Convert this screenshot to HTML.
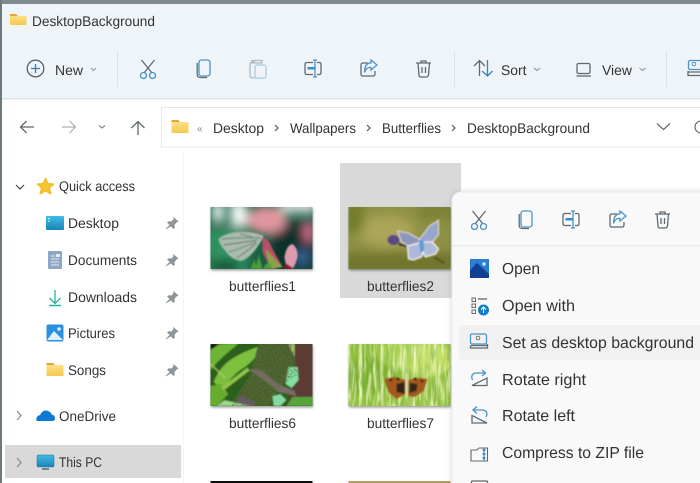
<!DOCTYPE html>
<html><head><meta charset="utf-8"><style>
html,body{margin:0;padding:0;background:#fff;width:700px;height:483px;overflow:hidden}
svg{display:block;filter:blur(.3px)}
text{font-family:"Liberation Sans",sans-serif;font-size:14px;fill:#333;text-rendering:geometricPrecision}
.m{font-size:16px}
.g{fill:none;stroke:#5e6a72;stroke-width:1.3}
.b{fill:none;stroke:#4a93c4;stroke-width:1.3}
.n{fill:none;stroke:#6b7378;stroke-width:1.2}
</style></head><body>
<svg width="700" height="483" viewBox="0 0 700 483" xmlns="http://www.w3.org/2000/svg">
<defs>
<filter id="bl6" x="-20%" y="-20%" width="140%" height="140%"><feGaussianBlur stdDeviation="5"/></filter>
<filter id="bl3" x="-20%" y="-20%" width="140%" height="140%"><feGaussianBlur stdDeviation="2.5"/></filter>
<filter id="bl1" x="-10%" y="-10%" width="120%" height="120%"><feGaussianBlur stdDeviation="0.7"/></filter>
<filter id="sh" x="-10%" y="-10%" width="120%" height="125%"><feDropShadow dx="0.5" dy="1.5" stdDeviation="1.2" flood-color="#000" flood-opacity=".4"/></filter>
<filter id="msh" x="-10%" y="-10%" width="120%" height="120%"><feDropShadow dx="0" dy="0" stdDeviation="3" flood-color="#000" flood-opacity=".14"/></filter>
<filter id="grL" x="0" y="0" width="100%" height="100%"><feTurbulence type="fractalNoise" baseFrequency=".28 .035" numOctaves="3" seed="4"/><feColorMatrix values="0 0 0 0 .9  0 0 0 0 .96  0 0 0 0 .55  2.6 0 0 0 -1.1"/></filter>
<filter id="grD" x="0" y="0" width="100%" height="100%"><feTurbulence type="fractalNoise" baseFrequency=".3 .05" numOctaves="3" seed="11"/><feColorMatrix values="0 0 0 0 .28  0 0 0 0 .5  0 0 0 0 .1  2.8 0 0 0 -1.25"/></filter>
<filter id="mot" x="0" y="0" width="100%" height="100%"><feTurbulence type="fractalNoise" baseFrequency=".55" numOctaves="2" seed="7"/><feColorMatrix values="0 0 0 0 .1  0 0 0 0 .15  0 0 0 0 .05  2.6 0 0 0 -1.1"/></filter>
<clipPath id="tc"><rect width="102" height="62"/></clipPath>
<clipPath id="moth"><path d="M48 0H82L88 30L70 42L58 62H20L40 30Z"/></clipPath>
<linearGradient id="fold" x1="0" y1="0" x2="0" y2="1"><stop offset="0" stop-color="#fde58f"/><stop offset="1" stop-color="#f5c84e"/></linearGradient>
<linearGradient id="desk" x1="0" y1="0" x2="0" y2="1"><stop offset="0" stop-color="#3fbbe6"/><stop offset="1" stop-color="#1a84ba"/></linearGradient>
<g id="cut"><path class="g" d="M1.5 0L12 13M14.500 0L4 13"/><circle class="b" cx="3.500" cy="15.500" r="3"/><circle class="b" cx="12.500" cy="15.500" r="3"/></g>
<g id="copy"><rect class="b" x="3" y="0" width="11" height="16" rx="2.400"/><path class="g" d="M1.200 3V14.500Q1.200 17.500 4.500 17.500H11"/></g>
<g id="ren"><path class="g" d="M9 2.500H3Q1 2.500 1 4.500V12.500Q1 14.500 3 14.500H9M13 2.500H15.500Q17 2.500 17 4.500V12.500Q17 14.500 15.500 14.500H13"/><path class="b" d="M9 0H13M11 0V17M9 17H13"/><rect x="3.500" y="7" width="7" height="2.500" fill="#3a8bbf"/></g>
<g id="share"><path class="g" d="M8 3H3Q1 3 1 5V14Q1 16 3 16H13Q15 16 15 14V11"/><path class="b" d="M11 0L17 5L11 10V7.400Q6 7 4.500 12.500Q4.500 3 11 2.800Z"/></g>
<g id="del"><path class="g" d="M0 3H15M5 3V1H10V3M2 3L3 15Q3 17 5 17H10Q12 17 12.500 15L13.500 3M6 7V13M9.500 7V13"/></g>
<g id="pin"><path d="M1 12L5 8L2.500 5.500L4 4.500L6.500 5L9 2L8.500 .5L13 4.500L11.500 5L9 8L9.500 10.500L8.500 11.500L6 9Z" fill="#8f9598" stroke="#8f9598" stroke-width=".7" stroke-linejoin="round"/></g>
</defs>

<!-- top chrome -->
<rect width="700" height="98" fill="#eff4f9"/>
<rect width="700" height="4" fill="#7f8a8f"/>
<rect y="98" width="700" height="1.500" fill="#dfe3e6"/>
<rect x="0" y="0" width="2" height="483" fill="#6c7a80"/>

<!-- title -->
<path d="M10 14H16L18 16H26.500V25H10Z" fill="url(#fold)"/>
<path d="M10 14H16L18 16H10Z" fill="#e2a82c"/>
<text x="32" y="26" textLength="123" lengthAdjust="spacingAndGlyphs">DesktopBackground</text>

<!-- toolbar -->
<circle cx="35.500" cy="68.500" r="8.300" class="g" style="stroke:#5a646b"/>
<path d="M35.500 64V73M31 68.500H40" class="b" style="stroke:#2f7fb5"/>
<text x="55" y="75" textLength="28" lengthAdjust="spacingAndGlyphs">New</text>
<path d="M91 68L93.500 70.500L96 68" class="n" style="stroke:#9aa1a6"/>
<rect x="117" y="51" width="1" height="36" fill="#dde2e6"/>
<use href="#cut" x="140" y="60"/>
<use href="#copy" x="196" y="60"/>
<g opacity=".42"><rect class="b" x="255" y="65" width="11" height="13" rx="2"/><path class="g" d="M255 62H253Q250 62 250 65V75Q250 78 253 78H255M252 60.500H262V63H252Z"/></g>
<use href="#ren" x="304" y="60"/>
<use href="#share" x="360" y="60"/>
<use href="#del" x="416" y="60"/>
<rect x="454" y="51" width="1" height="36" fill="#dde2e6"/>
<path class="g" d="M474 66L479.500 60.500L485 66M479.500 60.500V76"/>
<path class="b" d="M482 71L487.500 76L492.500 71M487.500 60V76" style="stroke:#3285bb"/>
<text x="501" y="75" textLength="25.500" lengthAdjust="spacingAndGlyphs">Sort</text>
<path d="M534 68L537 70.500L540 68" class="n" style="stroke:#9aa1a6"/>
<rect x="577" y="63.500" width="13" height="10" rx="1.500" class="g"/><path class="g" d="M576.500 76H591"/>
<text x="602" y="75" textLength="30" lengthAdjust="spacingAndGlyphs">View</text>
<path d="M639.500 68L642.500 70.500L645.500 68" class="n" style="stroke:#9aa1a6"/>
<rect x="666" y="51" width="1" height="36" fill="#dde2e6"/>
<rect x="688.500" y="60.500" width="14" height="9" rx="1.500" class="b"/><circle cx="694" cy="64" r="1.800" class="b" style="stroke-width:1"/><path class="g" d="M688 71V75.500H702M688 72H702"/>

<!-- nav -->
<path d="M34 127H21M26.500 121L20.500 127L26.500 133" class="g" style="stroke:#5f666b"/>
<path d="M62 127H75M69.500 121L75.500 127L69.500 133" class="n" style="stroke:#aab0b4"/>
<path d="M99 125.500L102 128L105 125.500" class="n" style="stroke:#7f868a"/>
<path d="M138 135V122M131.500 128L138 121.500L144.500 128" class="g" style="stroke:#5f666b"/>

<!-- address -->
<rect x="161.500" y="107.500" width="545" height="39.500" fill="#fff" stroke="#e5e7e9"/>
<path d="M171.500 120H178L180 122H188.500V133H171.500Z" fill="url(#fold)"/>
<path d="M171.500 120H178L180 122H171.500Z" fill="#e2a82c"/>
<text x="197" y="132" style="font-size:10px;fill:#888" textLength="7">«</text>
<text x="213" y="133" textLength="51" lengthAdjust="spacingAndGlyphs">Desktop</text>
<path d="M275 125L278 128L275 131" class="n" style="stroke:#555"/>
<text x="290" y="133" textLength="66" lengthAdjust="spacingAndGlyphs">Wallpapers</text>
<path d="M367 125L370 128L367 131" class="n" style="stroke:#555"/>
<text x="382" y="133" textLength="59" lengthAdjust="spacingAndGlyphs">Butterflies</text>
<path d="M452 125L455 128L452 131" class="n" style="stroke:#555"/>
<text x="467" y="133" textLength="123" lengthAdjust="spacingAndGlyphs">DesktopBackground</text>
<path d="M657 123.500L663.500 129.500L670 123.500" class="n" style="stroke:#666"/>
<circle cx="701" cy="127" r="6" class="n" style="stroke:#666"/>

<!-- sidebar -->
<rect x="183" y="150" width="1" height="333" fill="#f4f5f6"/>
<path d="M16 185L20 189L24 185" class="n" style="stroke:#444"/>
<path d="M45.500 178L48 183.500L54 184L49.500 188L51 194L45.500 191L40 194L41.500 188L37 184L43 183.500Z" fill="#f7c52d" stroke="#f2b722" stroke-linejoin="round"/>
<text x="59" y="191" textLength="76" lengthAdjust="spacingAndGlyphs">Quick access</text>

<rect x="46" y="216" width="18" height="14" rx="1" fill="url(#desk)"/>
<path d="M48 218.500H50M48 221H50" stroke="#d8f1fb" stroke-width="1"/>
<text x="68" y="228" textLength="51" lengthAdjust="spacingAndGlyphs">Desktop</text>
<use href="#pin" x="165" y="217"/>

<rect x="48" y="251" width="14" height="18" rx="1" fill="#8fa6c6"/>
<path d="M51 256H55M51 259H59M51 262H59M51 265H59" stroke="#e4eaf2" stroke-width="1"/><rect x="56" y="254" width="4" height="3" fill="#e4eaf2"/>
<text x="68" y="265" textLength="69" lengthAdjust="spacingAndGlyphs">Documents</text>
<use href="#pin" x="165" y="254"/>

<path d="M55 290V303M49.500 298L55 303.500L60.500 298" fill="none" stroke="#2cb09a" stroke-width="1.300"/><path d="M49 305.500H61" stroke="#2cb09a" stroke-width="1.500"/>
<text x="68" y="302" textLength="69" lengthAdjust="spacingAndGlyphs">Downloads</text>
<use href="#pin" x="165" y="291"/>

<rect x="46.500" y="324.500" width="17" height="17" rx="2" fill="#2b8fe0"/>
<path d="M47 340L54 331L63 340Z" fill="#dff0fb"/><circle cx="59" cy="329" r="1.800" fill="#dff0fb"/>
<text x="68" y="338" textLength="47" lengthAdjust="spacingAndGlyphs">Pictures</text>
<use href="#pin" x="165" y="327"/>

<path d="M46.500 363H53L55 365H63.500V376H46.500Z" fill="url(#fold)"/>
<path d="M46.500 363H53L55 365H46.500Z" fill="#e2a82c"/>
<text x="68" y="375" textLength="38" lengthAdjust="spacingAndGlyphs">Songs</text>
<use href="#pin" x="165" y="364"/>

<path d="M17 411L21 415.500L17 420" class="n" style="stroke:#888"/>
<path d="M36.500 421Q35.500 416 40 415Q43 409 48 411Q51 412 51.500 414.500Q55 415 55 418.500Q55 421 52 421Z" fill="#0f78d4"/>
<text x="59" y="421" textLength="57" lengthAdjust="spacingAndGlyphs">OneDrive</text>

<rect x="5" y="445" width="176" height="33" fill="#d9d9d9"/>
<path d="M17 458L21 462.500L17 467" class="n" style="stroke:#888"/>
<rect x="37" y="455" width="17" height="12" rx="1" fill="url(#desk)" stroke="#2a6f8e" stroke-width=".5"/>
<path d="M42 469H49" stroke="#4a6b7a" stroke-width="1.500"/>
<text x="59" y="467" textLength="43" lengthAdjust="spacingAndGlyphs">This PC</text>

<!-- selection -->
<rect x="340" y="163" width="121" height="135" fill="#d9d9d9"/>

<!-- thumb 1 -->
<g transform="translate(210.500,207)"><rect width="102" height="62" fill="#222" filter="url(#sh)"/>
<g clip-path="url(#tc)"><rect width="102" height="62" fill="#1a6046"/>
<g filter="url(#bl6)"><rect x="-5" y="22" width="42" height="50" fill="#2f9260"/><rect x="60" y="14" width="45" height="50" fill="#0f3329"/><ellipse cx="56" cy="13" rx="20" ry="14" fill="#e2959f"/><rect x="2" y="-5" width="11" height="20" fill="#f2f7f4"/><rect x="20" y="-5" width="16" height="24" fill="#f8fbf9"/><rect x="70" y="-6" width="36" height="11" fill="#f4eef0"/><ellipse cx="98" cy="25" rx="5" ry="11" fill="#d9708e"/><ellipse cx="92" cy="50" rx="7" ry="8" fill="#37659a"/><rect x="0" y="54" width="28" height="10" fill="#0a3f28"/></g>
<g filter="url(#bl1)"><path d="M8 32Q14 26 28 25Q44 24 53 29Q50 36 44 44Q36 53 30 54Q20 52 15 44Q9 38 8 32Z" fill="#a9bcae"/><path d="M11 32Q30 30 50 31M13 38Q30 36 47 33M18 45Q32 41 45 35M26 51Q36 45 46 36M30 27L42 30" stroke="#5d7263" stroke-width=".9" fill="none"/><path d="M52 30Q58 32 61 40L72 60L62 62Q54 52 52 44Z" fill="#b94f66"/><path d="M55 42L72 60L60 62Z" fill="#8aa248"/><path d="M74 50Q76 38 82 37Q88 42 87 50Q85 58 82 62H76Z" fill="#dd9cac"/><path d="M75 56L84 62H74Z" fill="#92182e"/><path d="M45 62L48 48L52 62M40 62L44 52L46 62M52 62L58 54L62 62" fill="#4f9d38"/></g></g></g>
<text x="229" y="291" textLength="67" lengthAdjust="spacingAndGlyphs">butterflies1</text>

<!-- thumb 2 -->
<g transform="translate(348.500,207)"><rect width="102" height="62" fill="#222" filter="url(#sh)"/>
<g clip-path="url(#tc)"><rect width="102" height="62" fill="#8e9144"/>
<g filter="url(#bl6)"><ellipse cx="38" cy="24" rx="28" ry="16" fill="#aca456"/><rect x="-5" y="46" width="110" height="20" fill="#6f752c"/><rect x="70" y="-5" width="40" height="18" fill="#7b8236"/><rect x="-5" y="-5" width="20" height="30" fill="#747d2c"/></g>
<g filter="url(#bl1)"><ellipse cx="45" cy="33" rx="6" ry="5" fill="#5a4a86"/><path d="M50 37L62 40" stroke="#3a2a3a" stroke-width="2"/><path d="M49 24L60 26L71 32L70 36L60 39L53 35Z" fill="#8f96bc" stroke="#e0ddd6" stroke-width="1"/><path d="M71 32L81 19L90 13L90 28L84 35L73 36Z" fill="#99a6cc" stroke="#e8e4da" stroke-width="1"/><path d="M59 39L71 36L75 45L73 50L65 53L60 52Z" fill="#aeb8dc" stroke="#f4f1e8" stroke-width="1.300"/><path d="M73 35L84 35L90 42L87 47L77 50L75 46Z" fill="#b0bbda" stroke="#f4f1e8" stroke-width="1.300"/><path d="M70 33L75 33L76 43L72 46Z" fill="#5f9ed0"/><path d="M85 50L96 56" stroke="#3f4a22" stroke-width="1.500"/></g></g></g>
<text x="367" y="291" textLength="67" lengthAdjust="spacingAndGlyphs">butterflies2</text>

<!-- thumb 6 -->
<g transform="translate(210.500,344)"><rect width="102" height="62" fill="#222" filter="url(#sh)"/>
<g clip-path="url(#tc)"><rect width="102" height="62" fill="#2c5f1c"/>
<g filter="url(#bl1)"><path d="M0 3Q14 -2 28 0Q14 10 0 26Z" fill="#6cb536"/><path d="M3 38Q10 20 26 12Q40 4 52 2Q44 18 30 26Q18 36 12 46Z" fill="#7cc03e"/><path d="M0 42L10 40L18 50L6 62H0Z" fill="#66ad2e"/><path d="M0 0H9L0 6Z" fill="#0b1a08"/><path d="M48 0H82L88 30L70 42L58 62H20L40 30Z" fill="#4a5f2c"/><path d="M78 0H89L95 22H88Z" fill="#a8c46c"/><path d="M84 0H102V62H76L84 36Z" fill="#5b3a36"/><path d="M78 23H87L88 36L81 44L75 40Z" fill="#84dda2"/><path d="M62 52L70 50L76 56L70 62H63Z" fill="#84d9a4"/><path d="M24 62L30 52L44 58V62Z" fill="#6d5272"/><path d="M38 25L56 38L68 48L86 52L84 47L68 40L50 26Z" fill="#7b6c68"/><path d="M0 20L15 34" stroke="#b6c46c" stroke-width="1.500"/><path d="M12 45L38 25" stroke="#93c24a" stroke-width="4"/><path d="M76 62H102V53H82Z" fill="#55a53a"/><path d="M6 62L14 56L40 62Z" fill="#9fd68a"/></g>
<g clip-path="url(#moth)"><rect width="102" height="62" filter="url(#mot)"/></g></g></g>
<text x="229" y="428" textLength="67" lengthAdjust="spacingAndGlyphs">butterflies6</text>

<!-- thumb 7 -->
<g transform="translate(348.500,344)"><rect width="102" height="62" fill="#222" filter="url(#sh)"/>
<g clip-path="url(#tc)"><rect width="102" height="62" fill="#8fbf3c"/>
<g filter="url(#bl3)"><ellipse cx="22" cy="35" rx="25" ry="22" fill="#7bb032"/><ellipse cx="80" cy="15" rx="24" ry="18" fill="#c6df68"/><ellipse cx="50" cy="10" rx="20" ry="14" fill="#aad152"/><rect x="0" y="50" width="102" height="14" fill="#93c03c"/></g>
<rect width="102" height="62" filter="url(#grD)" opacity=".8"/>
<rect width="102" height="62" filter="url(#grL)" opacity=".95"/>
<g filter="url(#bl1)"><path d="M36 35L46 33L57 36L57 50L48 55L40 48Z" fill="#a4591d"/><path d="M60 36L70 34L79 35L75 47L66 53L60 52Z" fill="#a4591d"/><path d="M48 40L56 38L56 50L48 48Z" fill="#33261a"/><path d="M61 39L69 40L68 47L61 49Z" fill="#33261a"/><path d="M58 29V54" stroke="#e9e3bd" stroke-width="1.800"/><path d="M41 36H44M48 35H51M65 35H68M72 37H75" stroke="#161008" stroke-width="2"/></g></g></g>
<text x="367" y="428" textLength="67" lengthAdjust="spacingAndGlyphs">butterflies7</text>

<!-- row 3 -->
<rect x="210.500" y="481" width="102" height="2" fill="#0c0c0c"/>
<rect x="348.500" y="481" width="102" height="2" fill="#b59d62"/>

<!-- context menu -->
<rect x="452" y="192" width="270" height="310" rx="9" fill="#f9f9f9" stroke="#ececec" filter="url(#msh)"/>
<rect x="453" y="245" width="247" height="1.500" fill="#ebebeb"/>
<use href="#cut" x="471" y="211"/>
<use href="#copy" x="518" y="211"/>
<use href="#ren" x="562" y="211"/>
<use href="#share" x="609" y="211"/>
<use href="#del" x="655" y="211"/>

<rect x="470" y="259" width="19" height="19" fill="#2a7fd5"/>
<path d="M470 278V270L477 263L489 274V278Z" fill="#123f8f"/><circle cx="484" cy="264" r="1.700" fill="#cfe6fa"/>
<text class="m" x="502" y="274" textLength="38" lengthAdjust="spacingAndGlyphs">Open</text>

<rect x="472" y="298" width="3.500" height="3.500" class="g" style="stroke-width:1"/><rect x="472" y="304" width="3.500" height="3.500" class="g" style="stroke-width:1"/><rect x="472" y="310" width="3.500" height="3.500" class="g" style="stroke-width:1"/><path d="M478 299H487" class="g"/>
<circle cx="483.500" cy="310" r="5.500" fill="#0f7cc7"/><path d="M483.500 313V307.500M481 309.500L483.500 307L486 309.500" stroke="#fff" stroke-width="1.100" fill="none"/>
<text class="m" x="502" y="311" textLength="73" lengthAdjust="spacingAndGlyphs">Open with</text>

<rect x="459" y="325" width="250" height="35" rx="4" fill="#f1f1f1"/>
<rect x="470.500" y="334" width="16" height="10" rx="1.500" class="b"/><circle cx="478" cy="338" r="1.800" class="g" style="stroke-width:.9"/><path d="M470.500 346V348H487.500V344M470.500 345.500H487.500" class="g"/>
<text class="m" x="502" y="348" textLength="192" lengthAdjust="spacingAndGlyphs">Set as desktop background</text>

<path class="g" d="M472 385.500L487 378V385.500Z"/><path class="b" d="M472.500 380Q470 374 476 373H485M482 370L485.500 373L482 376"/>
<text class="m" x="502" y="385" textLength="84" lengthAdjust="spacingAndGlyphs">Rotate right</text>

<path class="g" d="M472 423V415.500L487 423Z"/><path class="b" d="M486 417Q489 411 482.500 410H473.500M477 406.500L473 410L477 413.500"/>
<text class="m" x="502" y="421" textLength="73" lengthAdjust="spacingAndGlyphs">Rotate left</text>

<path class="g" d="M471 450H477L479 448H487.500V461H471Z" style="stroke-width:1.100"/><path class="b" d="M484 448V461"/><path d="M482.500 450H485.500M482.500 454H485.500M482.500 458H485.500" stroke="#2f7fb5" stroke-width="1.400"/>
<text class="m" x="502" y="458" textLength="142" lengthAdjust="spacingAndGlyphs">Compress to ZIP file</text>
<rect x="471.500" y="481" width="16" height="4" rx="1" class="g"/>
</svg>
</body></html>
